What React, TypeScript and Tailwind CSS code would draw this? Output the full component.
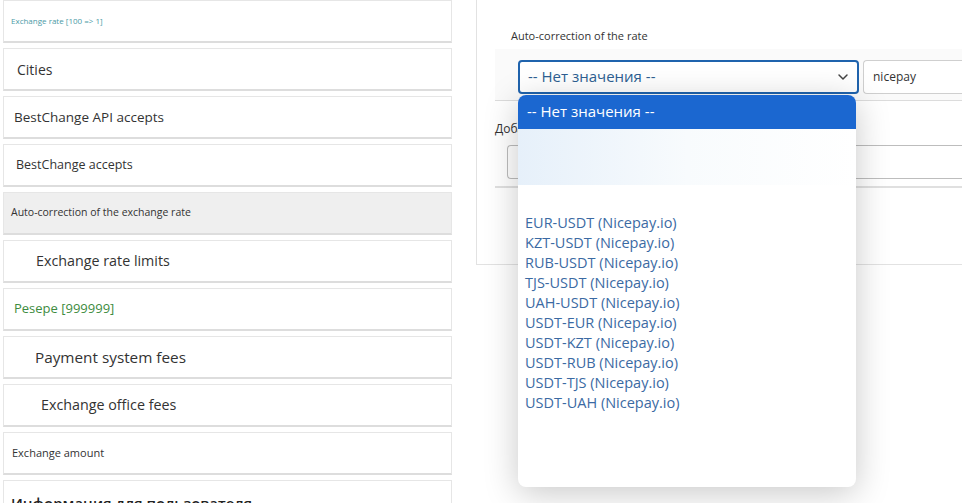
import { ChevronDown } from 'lucide-react';

const sections = [
  { label: 'Exchange rate [100 => 1]', cls: 'pl-[7px] text-[8px] text-[#4b9aa6]' },
  { label: 'Cities', cls: 'pl-[13px] text-[14px] text-[#333]' },
  { label: 'BestChange API accepts', cls: 'pl-[10px] text-[13.5px] text-[#333]' },
  { label: 'BestChange accepts', cls: 'pl-[12px] text-[12.5px] text-[#333]' },
  { label: 'Auto-correction of the exchange rate', cls: 'pl-[7px] text-[10.5px] text-[#333]', active: true },
  { label: 'Exchange rate limits', cls: 'pl-[32px] text-[14.3px] text-[#333]' },
  { label: 'Pesepe [999999]', cls: 'pl-[10px] text-[13px] text-[#3d8b40]' },
  { label: 'Payment system fees', cls: 'pl-[31px] text-[15.3px] text-[#333]' },
  { label: 'Exchange office fees', cls: 'pl-[37px] text-[14.3px] text-[#333]' },
  { label: 'Exchange amount', cls: 'pl-[8px] text-[11px] text-[#333]' },
];

const pairs = [
  'EUR-USDT', 'KZT-USDT', 'RUB-USDT', 'TJS-USDT', 'UAH-USDT',
  'USDT-EUR', 'USDT-KZT', 'USDT-RUB', 'USDT-TJS', 'USDT-UAH',
];

export default function App() {
  return (
    <div className="flex h-[503px] w-[962px] overflow-hidden bg-white font-['Open_Sans',sans-serif]">
      {/* settings sections list */}
      <div className="ml-[3px] flex w-[449px] shrink-0 flex-col gap-[5px]">
        {sections.map((s) => (
          <div
            key={s.label}
            className={`flex h-[43px] shrink-0 items-center border border-b-2 border-[#e6e6e6] border-b-[#dddddd] ${s.active ? 'bg-[#efefef]' : 'bg-white'}`}
          >
            <span className={s.cls}>{s.label}</span>
          </div>
        ))}
        <div className="flex h-[43px] shrink-0 items-start border border-[#e6e6e6] bg-white pt-[11px]">
          <span className="-ml-[3px] pl-[10px] text-[15px] font-semibold text-[#222]">Информация для пользователя</span>
        </div>
      </div>

      {/* auto-correction panel */}
      <div className="relative ml-[24px] h-[265px] flex-1 self-start border-b border-l border-[#e2e2e2]">
        <div className="pl-[34px] pt-[28px] text-[11px] text-[#333]">Auto-correction of the rate</div>
        <div className="ml-[18px] mt-[4px] border-b border-[#dcdcdc] bg-[#fafafa] pb-[6px] pt-[11px]">
          <div className="flex gap-[4px] pl-[23px]">
            <div className="relative">
              <div className="flex h-[34px] w-[341px] items-center justify-between rounded-[4px] border-2 border-[#1f63ad] bg-white pl-[8px] pr-[6px] text-[15px] text-[#2e5f92]">
                <span>-- Нет значения --</span>
                <ChevronDown size={16} strokeWidth={2.2} className="text-[#444]" />
              </div>
              {/* open dropdown list */}
              <div className="absolute left-0 top-[35px] z-10 h-[392px] w-[338px] overflow-hidden rounded-[8px] bg-white shadow-[0_6px_34px_rgba(0,0,0,0.22)]">
                <div className="flex h-[34px] items-center bg-[#1b67d0] pl-[9px] text-[15px] text-white">-- Нет значения --</div>
                <div className="h-[56px] bg-gradient-to-r from-[#e6f0fa] via-[#f8fbfd] to-white" />
                <div className="flex flex-col pl-[7px] pt-[28px] text-[14.5px] leading-[20px] text-[#3b6aa3]">
                  {pairs.map((p) => (
                    <span key={p}>{p} (Nicepay.io)</span>
                  ))}
                </div>
              </div>
            </div>
            <div className="flex h-[34px] flex-1 items-center rounded-l-[4px] border border-r-0 border-[#cfcfcf] bg-white pl-[9px] text-[12px] text-[#333]">
              nicepay
            </div>
          </div>
        </div>
        <div className="ml-[18px] pt-[19px] text-[12px] text-[#333]">Добавить</div>
        <div className="ml-[30px] mt-[7px] h-[34px] rounded-l-[4px] border border-r-0 border-[#bdbdbd] bg-white" />
        <div className="ml-[18px] mt-[7px] border-b-2 border-[#e0e0e0]" />
      </div>
    </div>
  );
}
